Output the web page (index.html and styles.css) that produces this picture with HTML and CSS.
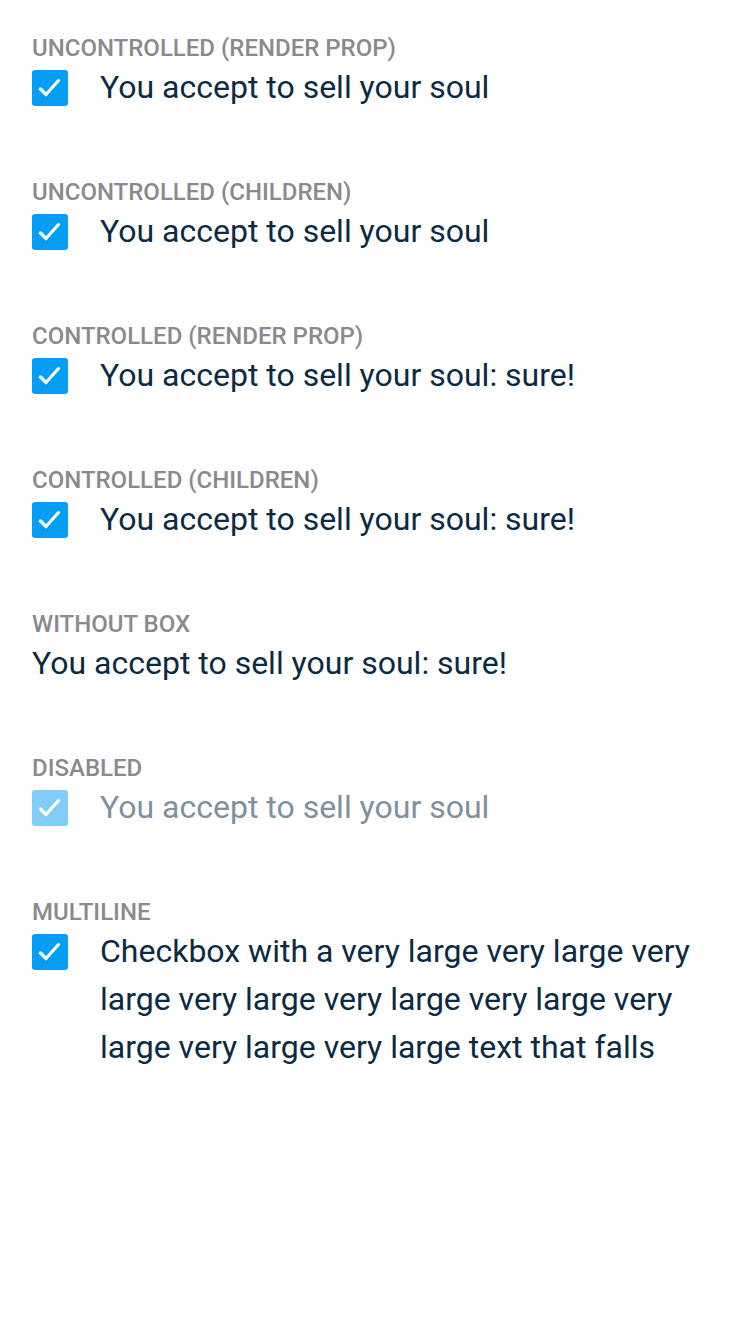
FILE: index.html
```html
<!DOCTYPE html>
<html>
<head>
<meta charset="utf-8">
<link rel="stylesheet" href="styles.css">
</head>
<body>
<main class="page">
  <section class="section">
    <div class="label">Uncontrolled (render prop)</div>
    <div class="row">
      <span class="box"><svg viewBox="0 0 36 36" width="36" height="36"><path d="M8.5 19 L14 24.5 L26.5 10.5" /></svg></span>
      <span class="text">You accept to sell your soul</span>
    </div>
  </section>
  <section class="section">
    <div class="label">Uncontrolled (children)</div>
    <div class="row">
      <span class="box"><svg viewBox="0 0 36 36" width="36" height="36"><path d="M8.5 19 L14 24.5 L26.5 10.5" /></svg></span>
      <span class="text">You accept to sell your soul</span>
    </div>
  </section>
  <section class="section">
    <div class="label">Controlled (render prop)</div>
    <div class="row">
      <span class="box"><svg viewBox="0 0 36 36" width="36" height="36"><path d="M8.5 19 L14 24.5 L26.5 10.5" /></svg></span>
      <span class="text">You accept to sell your soul: sure!</span>
    </div>
  </section>
  <section class="section">
    <div class="label">Controlled (children)</div>
    <div class="row">
      <span class="box"><svg viewBox="0 0 36 36" width="36" height="36"><path d="M8.5 19 L14 24.5 L26.5 10.5" /></svg></span>
      <span class="text">You accept to sell your soul: sure!</span>
    </div>
  </section>
  <section class="section">
    <div class="label">Without box</div>
    <div class="row">
      <span class="text plain">You accept to sell your soul: sure!</span>
    </div>
  </section>
  <section class="section">
    <div class="label">Disabled</div>
    <div class="row disabled">
      <span class="box"><svg viewBox="0 0 36 36" width="36" height="36"><path d="M8.5 19 L14 24.5 L26.5 10.5" /></svg></span>
      <span class="text">You accept to sell your soul</span>
    </div>
  </section>
  <section class="section">
    <div class="label">Multiline</div>
    <div class="row">
      <span class="box"><svg viewBox="0 0 36 36" width="36" height="36"><path d="M8.5 19 L14 24.5 L26.5 10.5" /></svg></span>
      <span class="text multi">Checkbox with a very large very large very large very large very large very large very large very large very large text that falls</span>
    </div>
  </section>
</main>
</body>
</html>
```

FILE: styles.css
```css
html, body {
  margin: 0;
  padding: 0;
  background: #ffffff;
}

.page {
  font-family: Roboto, "Noto Sans", sans-serif;
  padding: 34px 32px 0 32px;
  display: flex;
  flex-direction: column;
  gap: 67px;
}

.section {
  display: flex;
  flex-direction: column;
  gap: 1px;
}

.label {
  font-size: 24px;
  line-height: 28px;
  font-weight: 500;
  text-transform: uppercase;
  color: #8a8a8e;
}

.row {
  display: flex;
  align-items: flex-start;
}

.box {
  flex: none;
  width: 36px;
  height: 36px;
  margin-top: 7px;
  margin-right: 32px;
  border-radius: 3px;
  background: #049ef6;
  display: flex;
}

.box svg path {
  fill: none;
  stroke: #ffffff;
  stroke-width: 3.2;
  stroke-linecap: round;
  stroke-linejoin: round;
}

.text {
  font-size: 32px;
  line-height: 48px;
  color: #0b2a43;
}

.multi {
  max-width: 618px;
}

.disabled .box {
  background: #80cdfa;
}

.disabled .text {
  color: #7f909e;
}
```
